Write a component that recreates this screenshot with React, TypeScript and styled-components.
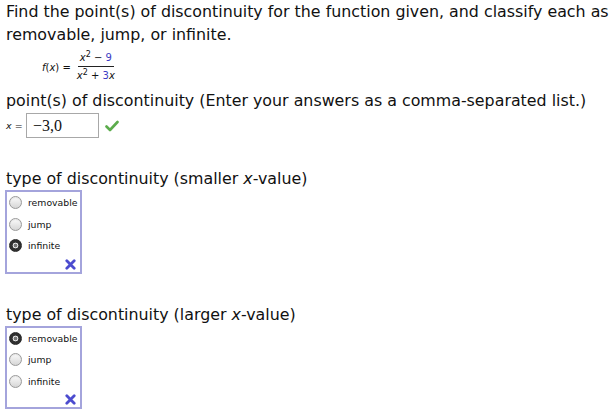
import React from "react";
import styled, { createGlobalStyle } from "styled-components";

const Global = createGlobalStyle`
  html, body { margin: 0; padding: 0; background: #fff; }
  body { font-family: "DejaVu Sans", Verdana, sans-serif; color: #111; }
`;

const Page = styled.div`
  padding: 0 0 0 6px;
`;

const Prompt = styled.p`
  margin: 0;
  font-size: 15.85px;
  line-height: 23px;
`;

const Formula = styled.div`
  display: flex;
  align-items: center;
  gap: 4px;
  margin: 5px 0 0 36px;
  font-size: 10px;
`;

const Frac = styled.span`
  display: inline-flex;
  flex-direction: column;
  align-items: center;
`;

const Num = styled.span`
  padding: 0 2px 1px;
  border-bottom: 1px solid #222;
  line-height: 13px;
`;

const Den = styled.span`
  padding: 2px 2px 0;
  line-height: 13px;
`;

const Sup = styled.span`
  font-size: 8px;
  position: relative;
  top: -4px;
`;

const Blue = styled.span`
  color: #3b3bc4;
`;

const I = styled.i`
  font-style: italic;
`;

const SectionLabel = styled.p<{ $top: number }>`
  margin: ${(p) => p.$top}px 0 0 0;
  font-size: 15.85px;
  line-height: 20px;
`;

const AnswerRow = styled.div`
  display: flex;
  align-items: center;
  margin-top: 2px;
  height: 25px;
`;

const Eq = styled.span`
  font-size: 9.5px;
  width: 20px;
`;

const Input = styled.div`
  box-sizing: border-box;
  width: 73px;
  height: 25px;
  border: 1px solid #a8a8a8;
  font-family: "Liberation Serif", "Times New Roman", serif;
  font-size: 16px;
  display: flex;
  align-items: center;
  padding-left: 6px;
`;

const Check = styled.svg`
  margin-left: 6px;
`;

const Box = styled.div`
  box-sizing: border-box;
  width: 77px;
  margin: 1px 0 0 -1px;
  border: 2px solid #a4a4dc;
  padding: 0 0 0 2px;
  display: flex;
  flex-direction: column;
`;

const Option = styled.label`
  display: flex;
  align-items: center;
  gap: 6px;
  height: 21.5px;
  font-size: 9.3px;
`;

const Radio = styled.span<{ $on?: boolean }>`
  box-sizing: border-box;
  width: 13px;
  height: 13px;
  border-radius: 50%;
  border: 1px solid ${(p) => (p.$on ? "#2a2a2a" : "#9a9a9a")};
  background: ${(p) =>
    p.$on
      ? "radial-gradient(circle, #777 0 1.6px, #e8e8e8 2.2px 2.6px, #2f2f2f 3.2px)"
      : "linear-gradient(#fbfbfb, #d6d6d6)"};
  box-shadow: inset 0 1px 1px rgba(0, 0, 0, 0.08);
`;

const XRow = styled.div`
  display: flex;
  justify-content: flex-end;
  padding-right: 4px;
  height: 15px;
  align-items: center;
`;

const Cross = () => (
  <svg width="11" height="11" viewBox="0 0 11 11">
    <path d="M1.8 1.8 L9.2 9.2 M9.2 1.8 L1.8 9.2" stroke="#4c4ccf" strokeWidth="2.8" strokeLinecap="round" />
  </svg>
);

const Choice = ({ selected }: { selected: string }) => (
  <Box>
    {["removable", "jump", "infinite"].map((o) => (
      <Option key={o}>
        <Radio $on={o === selected} />
        {o}
      </Option>
    ))}
    <XRow>
      <Cross />
    </XRow>
  </Box>
);

export default function App() {
  return (
    <>
      <Global />
      <Page>
        <Prompt>
          Find the point(s) of discontinuity for the function given, and classify each as removable, jump, or infinite.
        </Prompt>
        <Formula>
          <span>
            <I>f</I>(<I>x</I>) =
          </span>
          <Frac>
            <Num>
              <I>x</I>
              <Sup>2</Sup> − <Blue>9</Blue>
            </Num>
            <Den>
              <I>x</I>
              <Sup>2</Sup> + <Blue>3</Blue>
              <I>x</I>
            </Den>
          </Frac>
        </Formula>
        <SectionLabel $top={8}>
          point(s) of discontinuity (Enter your answers as a comma-separated list.)
        </SectionLabel>
        <AnswerRow>
          <Eq>
            <I>x</I> =
          </Eq>
          <Input>−3,0</Input>
          <Check width="14" height="12" viewBox="0 0 14 12">
            <path d="M1.5 6.5 L5 10 L12.5 2" fill="none" stroke="#5cac4c" strokeWidth="2.6" strokeLinecap="round" strokeLinejoin="round" />
          </Check>
        </AnswerRow>
        <SectionLabel $top={31}>
          type of discontinuity (smaller <I>x</I>-value)
        </SectionLabel>
        <Choice selected="infinite" />
        <SectionLabel $top={31}>
          type of discontinuity (larger <I>x</I>-value)
        </SectionLabel>
        <Choice selected="removable" />
      </Page>
    </>
  );
}
